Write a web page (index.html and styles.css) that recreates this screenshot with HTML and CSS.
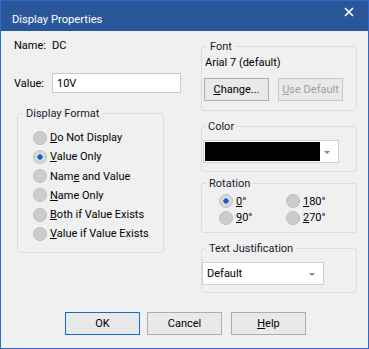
FILE: index.html
```html
<!DOCTYPE html>
<html lang="en">
<head>
	<meta charset="UTF-8">
	<title>Display Properties</title>
	<link rel="stylesheet" href="styles.css">
</head>
<body>
<div class="dialog">
	<div class="titlebar">
		<span class="title">Display Properties</span>
		<span class="close">
			<svg width="10" height="10" viewBox="0 0 10 10"><path d="M1 1L9 9M9 1L1 9" stroke="#fff" stroke-width="1.6"/></svg>
		</span>
	</div>

	<div class="content">
		<!-- left column -->
		<div class="col-left">
			<div class="field-row name-row">
				<span class="label">Name:</span>
				<span>DC</span>
			</div>
			<div class="field-row value-row">
				<span class="label">Value:</span>
				<div class="text-input">10V</div>
			</div>

			<div class="group format-group">
				<div class="group-title">Display Format</div>
				<div class="radio-list">
					<div class="radio"><span><u>D</u>o Not Display</span></div>
					<div class="radio checked"><span><u>V</u>alue Only</span></div>
					<div class="radio"><span>Nam<u>e</u> and Value</span></div>
					<div class="radio"><span><u>N</u>ame Only</span></div>
					<div class="radio"><span><u>B</u>oth if Value Exists</span></div>
					<div class="radio"><span><u>V</u>alue if Value Exists</span></div>
				</div>
			</div>
		</div>

		<!-- right column -->
		<div class="col-right">
			<div class="group font-group">
				<div class="group-title">Font</div>
				<div class="font-name">Arial 7 (default)</div>
				<div class="font-buttons">
					<div class="btn"><span><u>C</u>hange...</span></div>
					<div class="btn disabled"><span><u>U</u>se Default</span></div>
				</div>
			</div>

			<div class="group color-group">
				<div class="group-title">Color</div>
				<div class="combo color-combo">
					<div class="swatch"></div>
					<span class="arrow"></span>
				</div>
			</div>

			<div class="group rotation-group">
				<div class="group-title">Rotation</div>
				<div class="rotation-grid">
					<div class="radio checked"><span><u>0</u>°</span></div>
					<div class="radio"><span><u>1</u>80°</span></div>
					<div class="radio"><span><u>9</u>0°</span></div>
					<div class="radio"><span><u>2</u>70°</span></div>
				</div>
			</div>

			<div class="group justify-group">
				<div class="group-title">Text Justification</div>
				<div class="combo justify-combo">
					<span>Default</span>
					<span class="arrow"></span>
				</div>
			</div>
		</div>
	</div>

	<div class="button-row">
		<div class="btn default">OK</div>
		<div class="btn">Cancel</div>
		<div class="btn"><span><u>H</u>elp</span></div>
	</div>
</div>
</body>
</html>
```

FILE: styles.css
```css
* {
    margin: 0;
    padding: 0;
    box-sizing: border-box;
}

body {
    background: #f0f0f0;
    font-family: 'Segoe UI', Roboto, sans-serif;
    font-size: 11px;
    line-height: 15px;
    color: #000;
}

.dialog {
    width: 369px;
    height: 349px;
    border: 1px solid #2b6ad0;
    background: #f0f0f0;
    display: flex;
    flex-direction: column;
}

.titlebar {
    height: 30px;
    background: #2b579a;
    color: #fff;
    display: flex;
    align-items: center;
    justify-content: space-between;
    padding: 0 12px 0 11px;
    flex-shrink: 0;
}

.title {
    font-size: 11.2px;
    margin-top: 6px;
}

.close {
    display: flex;
    margin-top: -8px;
    margin-right: 2px;
}

.content {
    display: flex;
    gap: 20px;
    padding: 7px 0 0 13px;
}

.col-left {
    width: 167px;
}

.col-right {
    width: 156px;
}

.field-row {
    display: flex;
    align-items: center;
}

.label {
    width: 38px;
}

.value-row {
    margin-top: 20px;
}

.text-input {
    width: 129px;
    height: 20px;
    background: #fff;
    border: 1px solid #c9c9c9;
    padding: 1px 0 0 4px;
    line-height: 17px;
}

/* group boxes */
.group {
    border: 1px solid #dcdcdc;
    border-radius: 3px;
}

.group-title {
    width: fit-content;
    margin: -8px 0 0 6px;
    padding: 0 3px;
    background: #f0f0f0;
    color: #1a1a2e;
}

.format-group {
    margin: 20px 0 0 3px;
    width: 147px;
    padding: 0 0 8px 15px;
}

.format-group .group-title {
    margin-left: -10px;
}

.radio-list {
    margin-top: 7px;
}

.radio {
    display: flex;
    align-items: center;
    height: 19.25px;
}

.radio::before {
    content: '';
    width: 12px;
    height: 12px;
    border-radius: 50%;
    border: 1px solid #bdbdbd;
    background: #cccccc;
    margin-right: 3px;
    flex-shrink: 0;
}

.radio.checked::before {
    background: radial-gradient(circle, #0a63c8 0 2.4px, #d8d8d8 2.9px);
}

.font-group {
    margin-top: 8px;
    padding: 0 0 9px 2px;
}

.font-group .group-title {
    margin-left: 3px;
}

.font-name {
    margin-top: 1px;
    padding-left: 1px;
}

.font-buttons {
    display: flex;
    gap: 9px;
    margin-top: 8px;
}

.btn {
    width: 65px;
    height: 23px;
    border: 1px solid #adadad;
    background: #e9e9e9;
    display: flex;
    align-items: center;
    justify-content: center;
}

.btn.disabled {
    color: #a0a0a0;
    border-color: #c8c8c8;
}

.btn.default {
    border-color: #0a6fd4;
}

.color-group {
    margin-top: 15px;
    padding: 0 0 8px 1px;
}

.color-group .group-title {
    margin-left: 2px;
}

.combo {
    height: 23px;
    background: #fff;
    border: 1px solid #d0d0d0;
    display: flex;
    align-items: center;
    position: relative;
}

.color-combo {
    width: 136px;
    margin-top: 6px;
    padding: 0 0 0 1px;
}

.swatch {
    width: 115px;
    height: 19px;
    background: #000;
}

.arrow {
    position: absolute;
    right: 8px;
    top: 10px;
    border-left: 3px solid transparent;
    border-right: 3px solid transparent;
    border-top: 3px solid #888;
}

.rotation-group {
    margin-top: 11px;
    padding: 0 0 6px 17px;
}

.rotation-group .group-title {
    margin-left: -13px;
}

.rotation-grid {
    display: grid;
    grid-template-columns: 67px 1fr;
    margin-top: 2px;
}

.rotation-grid .radio {
    height: 16.6px;
}

.justify-group {
    margin-top: 15px;
    padding: 0 0 7px 0;
}

.justify-group .group-title {
    margin-left: 4px;
}

.justify-combo {
    width: 122px;
    margin-top: 6px;
    padding-left: 4px;
}

.button-row {
    display: flex;
    margin: auto 0 13px 64px;
}

.button-row .btn {
    width: 75px;
}

.button-row .btn + .btn {
    margin-left: 7px;
}

.button-row .btn:last-child {
    margin-left: 9px;
}
```
